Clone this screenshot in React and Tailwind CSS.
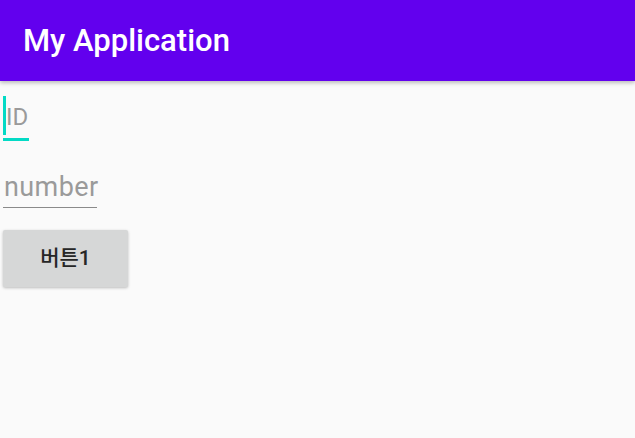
export default function App() {
  return (
    <div className="w-[635px] h-[438px] bg-[#fafafa] overflow-hidden" style={{ fontFamily: 'Roboto, "Noto Sans CJK KR", sans-serif' }}>
      <div className="h-[81px] bg-[#6200ee] flex items-center pl-[23px] shadow-[0_2px_4px_rgba(0,0,0,0.25)] relative z-10">
        <span className="text-white text-[31px] font-medium leading-none">My Application</span>
      </div>
      <div className="flex flex-col items-start pl-[3px]">
        <div className="mt-[15px] relative w-[26px] h-[45px] border-b-[3px] border-[#03dac5]">
          <div className="absolute left-0 top-0 w-[3px] h-[39px] bg-[#03dac5]" />
          <span className="absolute left-[3px] top-[6px] text-[24px] leading-[30px] text-[#9a9a9a]">ID</span>
        </div>
        <div className="mt-[24px] relative w-[94px] h-[43px] border-b border-[#8a8a8a]">
          <span className="absolute left-[1px] top-[7px] text-[27px] leading-[30px] tracking-[0.4px] text-[#9a9a9a] whitespace-nowrap">number</span>
        </div>
        <button className="mt-[22px] w-[125px] h-[57px] bg-[#d6d7d7] rounded-[2px] shadow-[0_1px_3px_rgba(0,0,0,0.25)] flex items-center justify-center text-[21px] font-medium text-[#262626]">
          버튼1
        </button>
      </div>
    </div>
  );
}
